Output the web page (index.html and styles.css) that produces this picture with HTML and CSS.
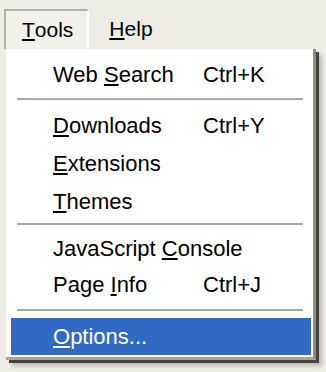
FILE: index.html
```html
<!DOCTYPE html>
<html>
<head>
<meta charset="utf-8">
<link rel="stylesheet" href="styles.css">
</head>
<body>
<div class="menubar">
  <div class="mb-btn active"><u>T</u>ools</div>
  <div class="mb-btn"><u>H</u>elp</div>
</div>
<div class="menu">
  <div class="item first"><span>Web <u>S</u>earch</span><span>Ctrl+K</span></div>
  <div class="sep s1"></div>
  <div class="item"><span><u>D</u>ownloads</span><span>Ctrl+Y</span></div>
  <div class="item"><span><u>E</u>xtensions</span><span></span></div>
  <div class="item"><span><u>T</u>hemes</span><span></span></div>
  <div class="sep s2"></div>
  <div class="item short"><span>JavaScript <u>C</u>onsole</span><span></span></div>
  <div class="item short"><span>Page <u>I</u>nfo</span><span>Ctrl+J</span></div>
  <div class="sep s3"></div>
  <div class="item selected"><span><u>O</u>ptions...</span><span></span></div>
</div>
</body>
</html>
```

FILE: styles.css
```css
html, body {
  margin: 0;
  padding: 0;
}
body {
  width: 326px;
  height: 372px;
  overflow: hidden;
  background: #edece5;
  font-family: "Liberation Sans", Arial, sans-serif;
  color: #000;
}
u {
  text-decoration: underline;
  text-decoration-thickness: 2px;
  text-underline-offset: 2px;
}
.menubar {
  display: flex;
  height: 40px;
  padding: 9px 0 0 4px;
}
.mb-btn {
  display: flex;
  align-items: center;
  font-size: 21px;
  padding: 0 0 0 20px;
}
.mb-btn.active {
  padding: 0 14px 0 16px;
  border-top: 2px solid #b3b0a6;
  border-left: 2px solid #b3b0a6;
  border-right: 2px solid #ffffff;
  background: #f1f0eb;
}
.menu {
  margin-left: 6px;
  width: 310px;
  box-sizing: border-box;
  background: #ffffff;
  padding: 7px 2px 2px 5px;
  border-right: 3px solid #8f8c82;
  border-bottom: 3px solid #a8a598;
  box-shadow: 3px 3px 0 #45433e, 6px 6px 4px rgba(0, 0, 0, 0.22);
  display: flex;
  flex-direction: column;
}
.item {
  display: grid;
  grid-template-columns: 150px auto;
  align-items: center;
  height: 38px;
  padding-left: 42px;
  font-size: 22px;
  white-space: nowrap;
}
.item.short {
  height: 36px;
}
.item.selected {
  height: 37px;
  background: #316ac5;
  color: #ffffff;
}
.sep {
  height: 2px;
  background: #aca899;
  margin-left: 6px;
  margin-right: 8px;
}
.sep.s1 {
  margin-top: 4px;
  margin-bottom: 7px;
}
.sep.s2 {
  margin-top: 2px;
  margin-bottom: 6px;
}
.sep.s3 {
  margin-top: 6px;
  margin-bottom: 7px;
}
```
